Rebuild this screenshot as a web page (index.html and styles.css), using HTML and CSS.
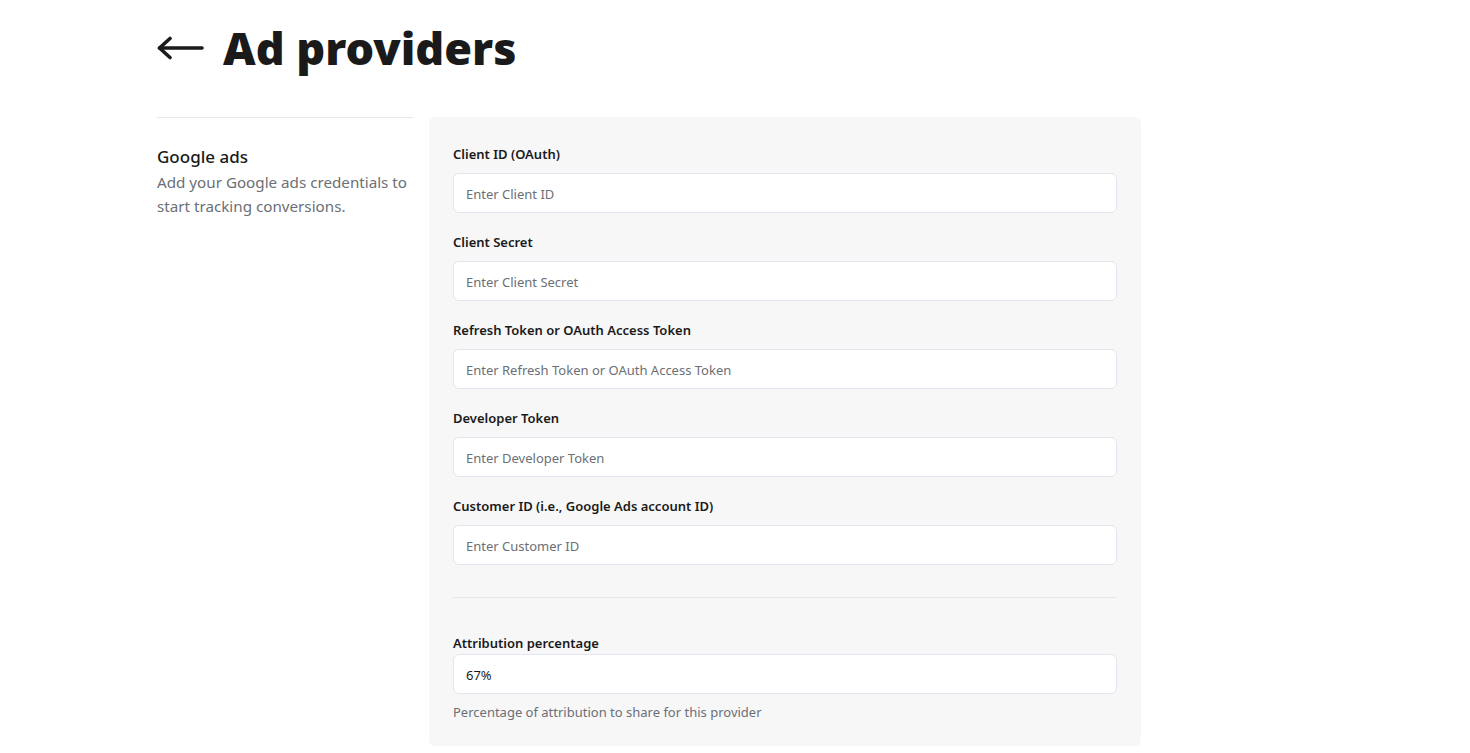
FILE: index.html
```html
<!DOCTYPE html>
<html lang="en">
<head>
<meta charset="utf-8">
<title>Ad providers</title>
<link rel="stylesheet" href="styles.css">
</head>
<body>
<div class="page">
  <header class="page-header">
    <a class="back" href="#" aria-label="Back">
      <svg width="48" height="26" viewBox="0 0 48 26" fill="none" stroke="#1a1a1a" stroke-width="3.6" stroke-linecap="round" stroke-linejoin="round">
        <path d="M2.5 13 H45"/>
        <path d="M13 3.5 L2.5 13 L13 22.5"/>
      </svg>
    </a>
    <h1 class="title">Ad providers</h1>
  </header>

  <section class="settings">
    <div class="intro">
      <h2 class="intro-title">Google ads</h2>
      <p class="intro-text">Add your Google ads credentials to start tracking conversions.</p>
    </div>

    <div class="panel">
      <div class="field">
        <label class="label">Client ID (OAuth)</label>
        <input class="input" type="text" placeholder="Enter Client ID">
      </div>
      <div class="field">
        <label class="label">Client Secret</label>
        <input class="input" type="text" placeholder="Enter Client Secret">
      </div>
      <div class="field">
        <label class="label">Refresh Token or OAuth Access Token</label>
        <input class="input" type="text" placeholder="Enter Refresh Token or OAuth Access Token">
      </div>
      <div class="field">
        <label class="label">Developer Token</label>
        <input class="input" type="text" placeholder="Enter Developer Token">
      </div>
      <div class="field field-group-end">
        <label class="label">Customer ID (i.e., Google Ads account ID)</label>
        <input class="input" type="text" placeholder="Enter Customer ID">
      </div>

      <hr class="divider">

      <div class="field field-last">
        <label class="label">Attribution percentage</label>
        <input class="input" type="text" value="67%">
        <p class="help">Percentage of attribution to share for this provider</p>
      </div>
    </div>
  </section>
</div>
</body>
</html>
```

FILE: styles.css
```css
* { box-sizing: border-box; }

html, body {
  margin: 0;
  padding: 0;
  background: #ffffff;
}

body {
  font-family: "Noto Sans", "Open Sans", "Liberation Sans", sans-serif;
  color: #1a1a1a;
}

.page {
  width: 1156px;
  margin: 0 auto;
}

.page-header {
  display: flex;
  align-items: center;
  gap: 18px;
  height: 117px;
  padding-bottom: 22px;
}

.back {
  display: flex;
  align-items: center;
}

.title {
  margin: 0;
  font-size: 45px;
  font-weight: 900;
  letter-spacing: 0;
  color: #1a1a1a;
  line-height: 1;
}

.settings {
  display: grid;
  grid-template-columns: 256px 712px;
  column-gap: 16px;
  align-items: start;
}

.intro {
  border-top: 1px solid #e5e7eb;
  padding-top: 26px;
}

.intro-title {
  margin: 0;
  font-size: 17px;
  line-height: 26px;
  font-weight: 500;
  color: #1a1a1a;
}

.intro-text {
  margin: 0;
  font-size: 15.2px;
  line-height: 24px;
  color: #6b6f76;
}

.panel {
  background: #f7f7f8;
  border-radius: 6px;
  padding: 27px 24px 24px;
}

.field {
  display: flex;
  flex-direction: column;
  gap: 9px;
  margin-bottom: 19px;
}

.field-group-end {
  margin-bottom: 0;
}

.field-last {
  margin-bottom: 0;
  gap: 0;
}

.field-last .input {
  margin-top: 1px;
}

.field-last .help {
  margin-top: 8px;
}

.label {
  font-size: 13px;
  line-height: 20px;
  font-weight: 600;
  color: #1a1a1a;
}

.input {
  height: 40px;
  border: 1px solid #e2e6ef;
  border-radius: 6px;
  background: #ffffff;
  padding: 1px 12px 0;
  font-family: inherit;
  font-size: 13px;
  color: #1a1a1a;
  outline: none;
}

.input::placeholder {
  color: #6b6f76;
}

.divider {
  border: 0;
  border-top: 1px solid #e5e7eb;
  margin: 32px 0 35px;
}

.help {
  margin: 0;
  font-size: 13px;
  line-height: 20px;
  color: #6b6f76;
}
```
